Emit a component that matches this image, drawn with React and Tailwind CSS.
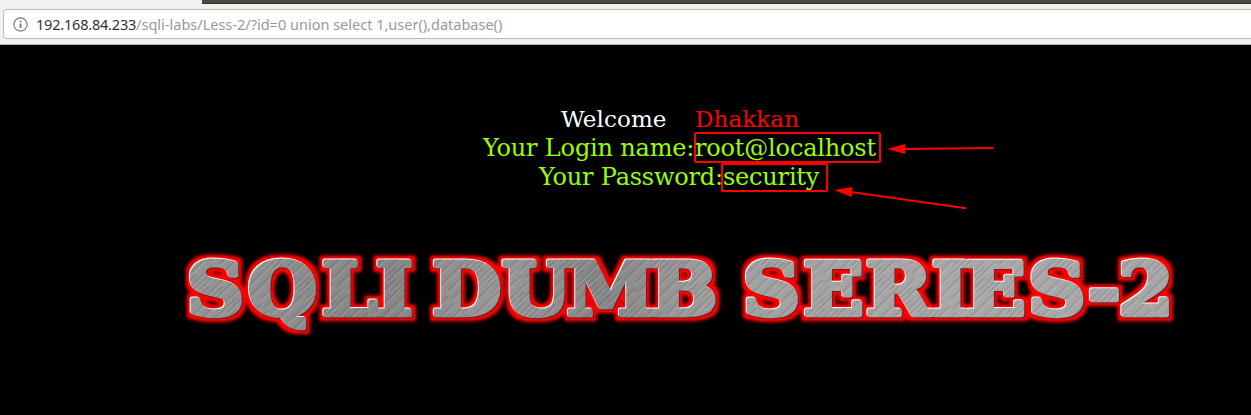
import React from "react";

const STRETCH = 1.1;

const WORDS = [
  { text: "SQLI", x: [187, 248, 322, 376] },
  { text: "DUMB", x: [432.5, 502, 567, 650.5] },
  { text: "SERIES-2", x: [743, 803.5, 866, 932, 965.5, 1028.5, 1088, 1118.5] },
];

function AddressBar() {
  return (
    <header className="flex h-[45px] flex-col border-b border-[#b9b5b0] bg-[#f2f1f0]">
      <div className="ml-[202px] h-1 shrink-0 border-b border-[#33312d] bg-[#4b4943]" />
      <div className="ml-[3px] mt-[5px] flex h-[30px] shrink-0 items-center rounded-l-[4px] border border-r-0 border-[#bbb8b4] bg-white pl-[9px]">
        <svg className="size-[15px] shrink-0" viewBox="0 0 15 15" fill="none">
          <circle cx="7.5" cy="7.5" r="6.6" stroke="#777" strokeWidth="1.1" />
          <path d="M7.5 3.5v1.7M7.5 6.4v4.9" stroke="#777" strokeWidth="1.7" />
        </svg>
        <div className="ml-[8px] whitespace-pre font-['Noto_Sans',sans-serif] text-[14.5px] leading-5 text-[#999]">
          <span className="tracking-[-0.2px] text-[#333]">192.168.84.233</span>
          <span>/sqli-labs/Less-2/?id=0 union select 1,user(),database()</span>
        </div>
      </div>
    </header>
  );
}

function Banner() {
  return (
    <svg className="block h-[110px] w-[1251px]" viewBox="0 235 1251 110">
      <defs>
        <linearGradient id="shade" x1="170" y1="250" x2="1090" y2="320" gradientUnits="userSpaceOnUse">
          <stop offset="0" stopColor="#969696" />
          <stop offset=".2" stopColor="#868686" />
          <stop offset=".31" stopColor="#989898" />
          <stop offset=".41" stopColor="#868686" />
          <stop offset=".52" stopColor="#9e9e9e" />
          <stop offset=".75" stopColor="#a8a8a8" />
          <stop offset="1" stopColor="#a6a6a6" />
        </linearGradient>
        <pattern id="metal" width="1251" height="415" patternUnits="userSpaceOnUse">
          <rect width="1251" height="415" fill="url(#shade)" />
          <rect width="1251" height="415" fill="url(#brush)" />
        </pattern>
        <pattern id="brush" width="17" height="61" patternUnits="userSpaceOnUse" patternTransform="rotate(43)">
          <path d="M1 0v34M5 18v43M9 3v25M14 28v33" stroke="#fff" strokeOpacity=".18" strokeWidth=".8" />
          <path d="M3 11v45M7 0v26M11 19v42M16 1v31" stroke="#000" strokeOpacity=".17" strokeWidth=".9" />
        </pattern>
        <filter id="bevel" x="150" y="235" width="1060" height="110" filterUnits="userSpaceOnUse" colorInterpolationFilters="sRGB">
          <feMorphology in="SourceAlpha" operator="dilate" radius="4" result="fat" />
          <feGaussianBlur in="fat" stdDeviation="1.6" result="soft" />
          <feFlood floodColor="#ff0000" />
          <feComposite in2="soft" operator="in" result="glow" />
          <feOffset in="SourceAlpha" dx="-0.8" dy="-0.8" result="lightShape" />
          <feFlood floodColor="#fff" />
          <feComposite in2="lightShape" operator="in" result="light" />
          <feOffset in="SourceAlpha" dx="0.6" dy="0.6" result="darkShape" />
          <feFlood floodColor="#6a2020" />
          <feComposite in2="darkShape" operator="in" result="dark" />
          <feMerge>
            <feMergeNode in="glow" />
            <feMergeNode in="dark" />
            <feMergeNode in="light" />
            <feMergeNode in="SourceGraphic" />
          </feMerge>
        </filter>
      </defs>
      <g filter="url(#bevel)">
        <g
          transform={`scale(${STRETCH} 1)`}
          fill="url(#metal)"
          stroke="url(#metal)"
          strokeWidth="4.4"
          strokeLinejoin="round"
          className="font-['DejaVu_Serif',serif] text-[72px] font-bold"
        >
          {WORDS.map((w) => (
            <text key={w.text} x={w.x.map((v) => (v / STRETCH).toFixed(2)).join(" ")} y="314.7">
              {w.text}
            </text>
          ))}
        </g>
      </g>
    </svg>
  );
}

export default function App() {
  return (
    <div className="h-[415px] w-[1251px] overflow-hidden bg-black">
      <AddressBar />
      <main className="relative">
        <div className="flex h-[190px] flex-col pt-[60px] font-['DejaVu_Serif',serif] text-[24px] leading-[29px] text-[#99ff00]">
          <div className="ml-[561px] flex whitespace-pre text-[23px] tracking-[0.1px]">
            <span className="w-[134px] text-white">Welcome</span>
            <span className="text-[#f00]">Dhakkan</span>
          </div>
          <div className="ml-[483px] flex whitespace-pre tracking-[-0.18px]">
            <span className="w-[211px]">Your Login name:</span>
            <span className="-mt-[2px] h-[31px] w-[187px] rounded-[2px] border-2 border-[#f00] leading-[28px]">
              <span className="-ml-px">root@localhost</span>
            </span>
          </div>
          <div className="ml-[539px] flex whitespace-pre tracking-[-0.2px]">
            <span className="w-[182px]">Your Password:</span>
            <span className="h-[29px] w-[107px] rounded-[2px] border-2 border-[#f00] leading-[25px]">security</span>
          </div>
        </div>
        <Banner />
        <svg className="absolute left-[830px] top-[95px] h-[75px] w-[170px]" viewBox="830 140 170 75" fill="#f00">
          <path d="M904 149L993.500 148" stroke="#f00" strokeWidth="2" />
          <path d="M887 149l18-5v10z" />
          <path d="M851 192L966 208.300" stroke="#f00" strokeWidth="2" />
          <path d="M834 190l18.500-3l-.8 10z" />
        </svg>
      </main>
    </div>
  );
}
